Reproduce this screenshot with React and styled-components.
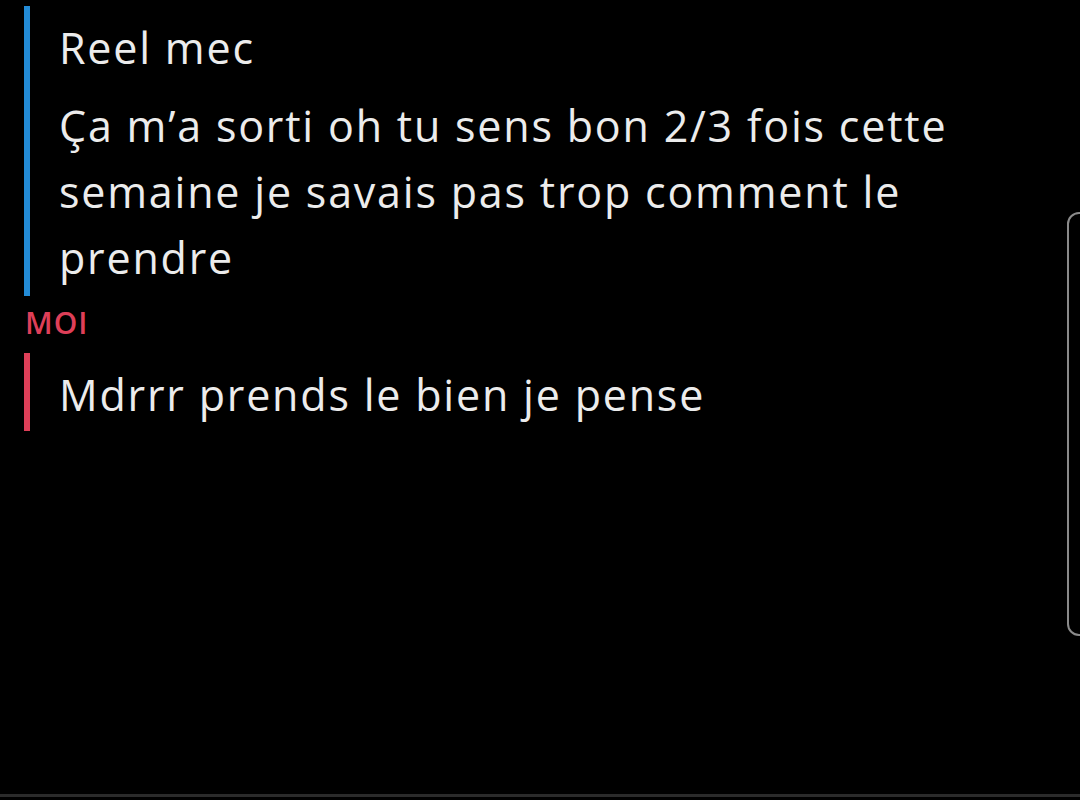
import styled, { createGlobalStyle } from "styled-components";

const GlobalStyle = createGlobalStyle`
  html, body {
    margin: 0;
    padding: 0;
    background: #000000;
  }
`;

const messages = [
  {
    id: 1,
    sender: null,
    color: "#238bd6",
    lines: [
      "Reel mec",
      "Ça m’a sorti oh tu sens bon 2/3 fois cette semaine je savais pas trop comment le prendre",
    ],
  },
  {
    id: 2,
    sender: "MOI",
    color: "#de3f58",
    lines: ["Mdrrr prends le bien je pense"],
  },
];

export default function App() {
  return (
    <>
      <GlobalStyle />
      <Screen>
        <Chat>
          {messages.map((group) => (
            <Group key={group.id}>
              {group.sender && (
                <Sender color={group.color}>{group.sender}</Sender>
              )}
              <Bubble color={group.color} first={!group.sender}>
                {group.lines.map((line, i) => (
                  <Text key={i}>{line}</Text>
                ))}
              </Bubble>
            </Group>
          ))}
        </Chat>
        <Handle />
        <BottomLine />
      </Screen>
    </>
  );
}

const Screen = styled.div`
  position: relative;
  height: 800px;
  width: 1080px;
  overflow: hidden;
  display: flex;
  flex-direction: column;
  background: #000000;
  font-family: "Open Sans", Lato, sans-serif;
`;

const Chat = styled.div`
  flex: 1;
  display: flex;
  flex-direction: column;
  padding: 6px 110px 0 24px;
`;

const Group = styled.div`
  display: flex;
  flex-direction: column;
`;

const Sender = styled.div`
  margin-top: 9px;
  padding-left: 1px;
  color: ${(p) => p.color};
  font-size: 30px;
  font-weight: 600;
  line-height: 36px;
  letter-spacing: 1px;
`;

const Bubble = styled.div`
  display: flex;
  flex-direction: column;
  gap: 12px;
  margin-top: ${(p) => (p.first ? "0" : "12px")};
  padding: ${(p) => (p.first ? "9px 0 5px 29px" : "9px 0 3px 29px")};
  border-left: 6px solid ${(p) => p.color};
`;

const Text = styled.div`
  color: #ececec;
  font-size: 43px;
  line-height: 66px;
  letter-spacing: 1.8px;
`;

const Handle = styled.div`
  position: absolute;
  top: 212px;
  left: 1067px;
  width: 30px;
  height: 420px;
  border: 2px solid #8a8a8a;
  border-radius: 12px;
`;

const BottomLine = styled.div`
  height: 3px;
  margin-bottom: 3px;
  background: #2b2b2b;
`;
